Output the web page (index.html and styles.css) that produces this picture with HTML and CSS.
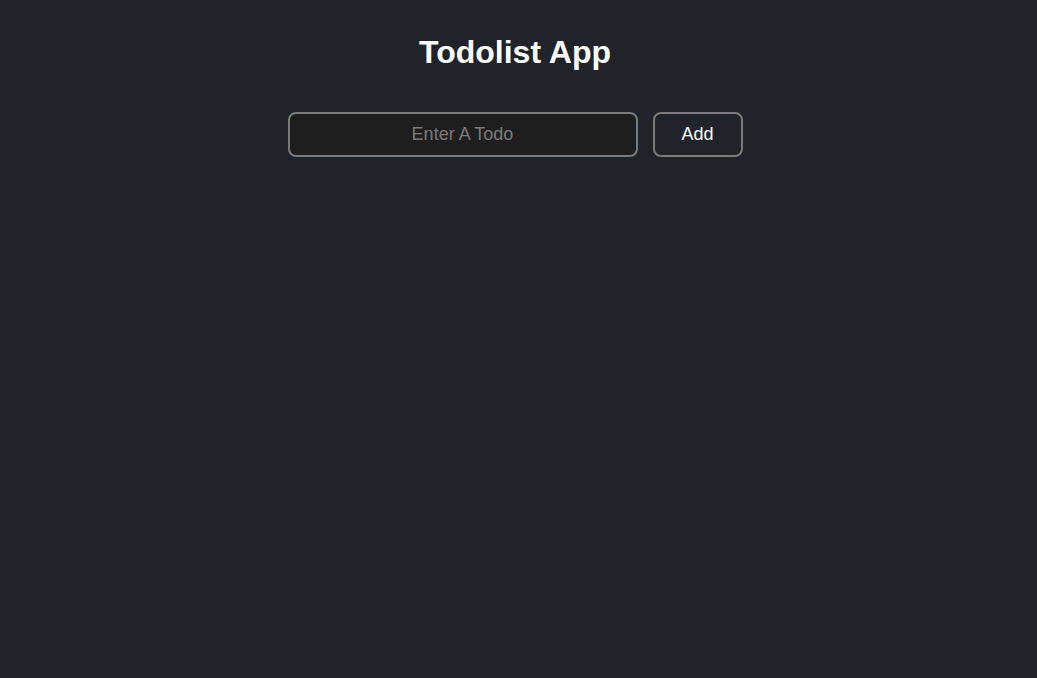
FILE: index.html
```html
<!DOCTYPE html>
<html>
<head>
<meta charset="utf-8">
<link rel="stylesheet" href="styles.css">
</head>
<body>
<div class="app">
  <h1 class="title">Todolist App</h1>
  <form class="todo-form">
    <input class="todo-input" type="text" placeholder="Enter A Todo">
    <button class="add-btn" type="button">Add</button>
  </form>
</div>
</body>
</html>
```
FILE: styles.css
```css
html, body {
  margin: 0;
  padding: 0;
  height: 100%;
  background: #20232a;
}
body {
  font-family: "Liberation Sans", Arial, sans-serif;
  color: #fff;
}
.app {
  display: flex;
  flex-direction: column;
  align-items: center;
  padding: 0 7px 0 0;
}
.title {
  margin: 0;
  padding-top: 34px;
  font-size: 32px;
  font-weight: bold;
  line-height: 37px;
  color: #fff;
}
.todo-form {
  display: flex;
  gap: 15px;
  margin-top: 41px;
}
.todo-input {
  box-sizing: border-box;
  width: 350px;
  height: 45px;
  background: #1e1e1e;
  border: 2px solid #7a7a7a;
  border-radius: 8px;
  color: #fff;
  font-family: "Liberation Sans", Arial, sans-serif;
  font-size: 18px;
  text-align: center;
  outline: none;
  padding: 0 10px;
}
.todo-input::placeholder {
  color: #7a7a7a;
}
.add-btn {
  box-sizing: border-box;
  width: 90px;
  height: 45px;
  background: #20232a;
  border: 2px solid #7a7a7a;
  border-radius: 8px;
  color: #fff;
  font-family: "Liberation Sans", Arial, sans-serif;
  font-size: 18px;
  cursor: pointer;
}
```
